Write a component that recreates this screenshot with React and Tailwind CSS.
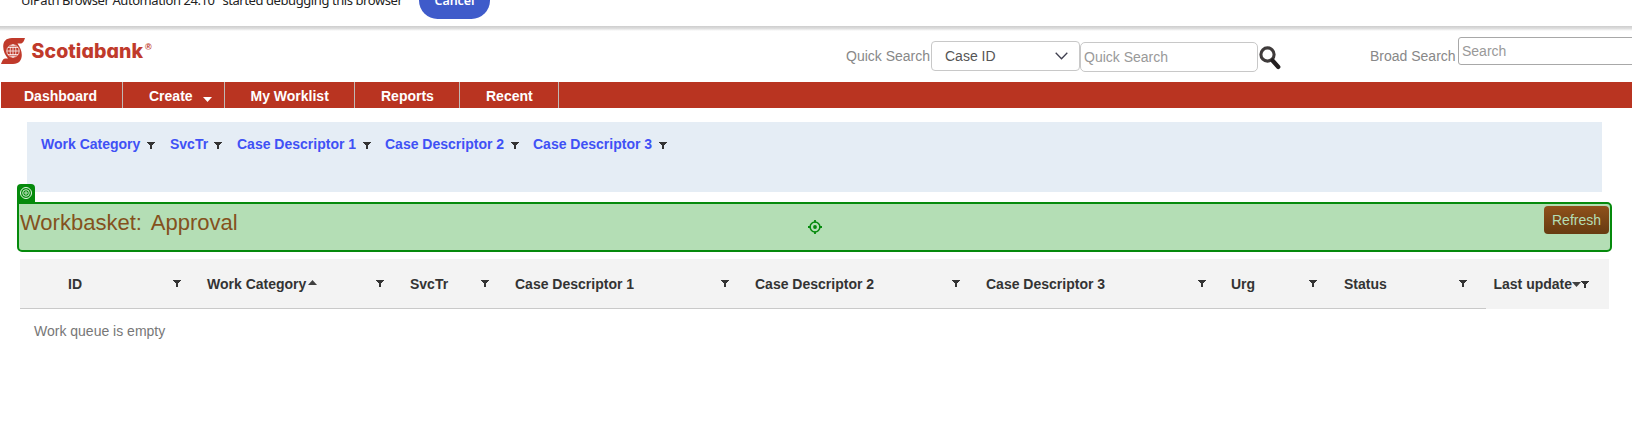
function Funnel({ className = "" }) {
  return (
    <svg className={`block h-[7px] w-2 shrink-0 ${className}`} viewBox="0 0 8 7" shapeRendering="crispEdges">
      <path d="M0 0h8v1H7v1H6v1H5v4H3V3H2V2H1V1H0z" fill="#333" />
    </svg>
  );
}

function Caret({ up = false, className = "" }) {
  return (
    <svg className={`block h-[5px] w-[9px] shrink-0 ${className}`} viewBox="0 0 9 5">
      <path d={up ? "M0 5L4.500 0L9 5z" : "M0 0H9L4.500 5z"} fill="#404040" />
    </svg>
  );
}

function Logo() {
  return (
    <div className="flex h-[34px] w-[170px] items-start">
      <svg className="mt-2 block h-[26px] w-6 shrink-0" viewBox="0 0 24 26">
        <path
          d="M24 0H11C5 0 2.200 3.500 2.200 8.500C2.200 13 4 17 7 20.500H4C2 20.500 1 23 0 26H12C18 26 20.800 22 20.800 17C20.800 13 19 9 16.500 5.500H19.500C22 5.500 23 3 24 0Z"
          fill="#c03a2b"
        />
        <g fill="none" stroke="#fff" strokeWidth=".75">
          <circle cx="12" cy="13" r="6.200" />
          <ellipse cx="12" cy="13" rx="2.900" ry="6.200" />
          <path d="M12 6.800v12.400M5.800 13h12.400M7 9.500h10M7 16.500h10" />
        </g>
      </svg>
      <span className="ml-[6.500px] mt-[10px] font-['Inter',sans-serif] text-[19.5px] font-extrabold leading-[22px] tracking-[0.08px] text-[#c03a2b] [font-feature-settings:'cv11']">
        Scotiabank
      </span>
      <span className="ml-0.5 mt-[13px] text-[9px] font-bold leading-[8px] text-[#c03a2b]">®</span>
    </div>
  );
}

const filters = [
  { label: "Work Category", width: "w-[129px]", pad: "pr-[15px]" },
  { label: "SvcTr", width: "w-[67px]", pad: "pr-[15px]" },
  { label: "Case Descriptor 1", width: "w-[148px]", pad: "pr-[14px]" },
  { label: "Case Descriptor 2", width: "w-[148px]", pad: "pr-[14px]" },
  { label: "Case Descriptor 3", width: "w-[148px]", pad: "pr-[14px]" },
];

const columns = [
  { label: "ID", width: "w-[139px]", pad: "pr-[26px]" },
  { label: "Work Category", width: "w-[203px]", pad: "pr-[26px]", sort: true },
  { label: "SvcTr", width: "w-[105px]", pad: "pr-[26px]" },
  { label: "Case Descriptor 1", width: "w-[240px]", pad: "pr-[26px]" },
  { label: "Case Descriptor 2", width: "w-[231px]", pad: "pr-[26px]" },
  { label: "Case Descriptor 3", width: "w-[245px]", pad: "pr-[25px]" },
  { label: "Urg", width: "w-[113px]", pad: "pr-[27px]" },
  { label: "Status", width: "w-[143px]", pad: "pr-[20px]" },
];

function NavItem({ children, className }) {
  return (
    <div className={`flex h-[26px] shrink-0 items-center border-r border-[#c0b8b5] text-sm font-bold leading-4 text-white ${className}`}>
      {children}
    </div>
  );
}

export default function App() {
  return (
    <div className="h-[435px] w-[1632px] overflow-hidden bg-white font-['Liberation_Sans',Arial,sans-serif] text-sm">
      <div className="flex h-[26px] items-start overflow-hidden pl-4 font-['Noto_Sans',sans-serif] text-[13px] text-[#222]">
        <div className="-mt-[10px] w-[403px] shrink-0 whitespace-nowrap leading-5 tracking-[-0.42px]">
          "UiPath Browser Automation 24.10" started debugging this browser
        </div>
        <button className="-mt-[18px] h-[37px] w-[71px] shrink-0 rounded-full bg-[#3f5bca] text-[12.5px] font-semibold leading-5 tracking-[-0.1px] text-white">
          Cancel
        </button>
      </div>
      <div className="h-[5px] bg-gradient-to-b from-[#cdcdcd] via-[#dedede] to-white" />

      <header className="flex h-[51px] items-start pl-px">
        <div className="-mt-px w-[845px] shrink-0">
          <Logo />
        </div>
        <span className="mt-[17px] w-[85px] shrink-0 whitespace-nowrap leading-4 text-[#888]">Quick Search</span>
        <div className="mt-[10px] flex h-[30px] w-[149px] shrink-0 items-center justify-between rounded-[4px] border border-[#c8c8c8] pl-[13px] pr-[11px] text-[#555]">
          Case ID
          <svg className="h-2 w-[13px]" viewBox="0 0 13 8" fill="none">
            <path d="M.7 .8L6.500 6.800L12.300 .8" stroke="#404050" strokeWidth="1.300" />
          </svg>
        </div>
        <div className="mt-[11px] flex h-[30px] w-[178px] shrink-0 items-center rounded-[5px] border border-[#c8c8c8] pl-[3px] text-[#999]">
          Quick Search
        </div>
        <svg className="ml-px mt-[15px] h-6 w-[22px] shrink-0" viewBox="0 0 22 24" fill="none">
          <circle cx="8.500" cy="8.500" r="6.600" stroke="#3f3b3b" strokeWidth="3.100" />
          <path d="M13.500 14.500L19.300 21" stroke="#231f20" strokeWidth="4.200" strokeLinecap="round" />
        </svg>
        <span className="ml-[89px] mt-[17px] w-[88px] shrink-0 whitespace-nowrap leading-4 text-[#888]">Broad Search</span>
        <div className="mt-[6px] flex h-[28px] w-[190px] shrink-0 items-center rounded-[3px] border border-[#a8a8a8] pl-[3px] text-[#999]">
          Search
        </div>
      </header>

      <nav className="ml-px flex h-[26px] bg-[#b93421]">
        <NavItem className="w-[122px] pl-[23px] pt-[2px]">Dashboard</NavItem>
        <NavItem className="w-[102px] gap-[10px] pl-[26px] pt-[2px]">
          Create
          <svg className="mt-[6px] h-[5px] w-[9px]" viewBox="0 0 9 5">
            <path d="M0 0H9L4.500 5z" fill="#fff" />
          </svg>
        </NavItem>
        <NavItem className="w-[130px] pl-[25.500px] pt-[2px]">My Worklist</NavItem>
        <NavItem className="w-[105px] pl-[26px] pt-[2px]">Reports</NavItem>
        <NavItem className="w-[99px] pl-[26px] pt-[2px]">Recent</NavItem>
      </nav>

      <section className="ml-[27px] mt-[14px] flex h-[70px] w-[1575px] bg-[#e5edf5] pl-[14px] pt-[14px]">
        {filters.map((f) => (
          <div key={f.label} className={`flex h-4 shrink-0 items-start justify-between ${f.width} ${f.pad}`}>
            <span className="whitespace-nowrap font-bold leading-4 text-[#3f51f5]">{f.label}</span>
            <Funnel className="mt-[6px]" />
          </div>
        ))}
      </section>

      <section className="relative ml-[17px] mt-[10px] flex h-[50px] w-[1595px] items-start justify-between rounded-[5px] rounded-tl-none border-2 border-[#058a0c] bg-[#b4deb5] pl-px pr-px">
        <div className="absolute -left-0.5 -top-5 flex h-[19px] w-[18px] items-start justify-center rounded-t-[4px] bg-[#058a0c] pt-[3px]">
          <svg className="h-3 w-3" viewBox="0 0 12 12" fill="none" stroke="#e8f6e8">
            <circle cx="6" cy="6" r="5.500" />
            <circle cx="6" cy="6" r="3.300" strokeWidth=".9" />
            <circle cx="6" cy="6" r="1.200" strokeWidth=".9" />
          </svg>
        </div>
        <h1 className="mt-[6px] flex gap-[9px] text-[22px] leading-[25px] text-[#84511d]">
          <span>Workbasket:</span>
          <span>Approval</span>
        </h1>
        <svg className="absolute left-[789px] top-4 h-[14px] w-[14px]" viewBox="0 0 14 14" fill="none" stroke="#058a0c">
          <circle cx="7" cy="7" r="4.900" strokeWidth="1.500" />
          <circle cx="7" cy="7" r="1.900" fill="#058a0c" stroke="none" />
          <path d="M7 0v2.500M7 11.500V14M0 7h2.500M11.500 7H14" strokeWidth="1.800" />
        </svg>
        <button className="mt-0.5 h-7 w-[65px] rounded-[4px] bg-gradient-to-b from-[#8f511b] to-[#673b11] text-sm text-[#b4deb5]">Refresh</button>
      </section>

      <section className="ml-5 mt-[7px] flex h-[50px] w-[1589px] bg-[#f3f3f3]">
        <div className="flex w-[1466px] shrink-0 border-b border-[#c9c9c9] pl-12">
          {columns.map((c) => (
            <div key={c.label} className={`flex shrink-0 items-start pt-[17px] ${c.width} ${c.pad}`}>
              <span className="whitespace-nowrap font-bold leading-4 text-[#333]">{c.label}</span>
              {c.sort && <Caret up className="ml-[1.500px] mt-[4px]" />}
              <Funnel className="ml-auto mt-[4px]" />
            </div>
          ))}
        </div>
        <div className="flex items-start pl-[7.500px] pt-[17px]">
          <span className="whitespace-nowrap font-bold leading-4 text-[#333]">Last update</span>
          <Caret className="mt-[6px]" />
          <Funnel className="mt-[5px]" />
        </div>
      </section>
      <p className="ml-[34px] mt-[14px] leading-4 text-[#777]">Work queue is empty</p>
    </div>
  );
}
